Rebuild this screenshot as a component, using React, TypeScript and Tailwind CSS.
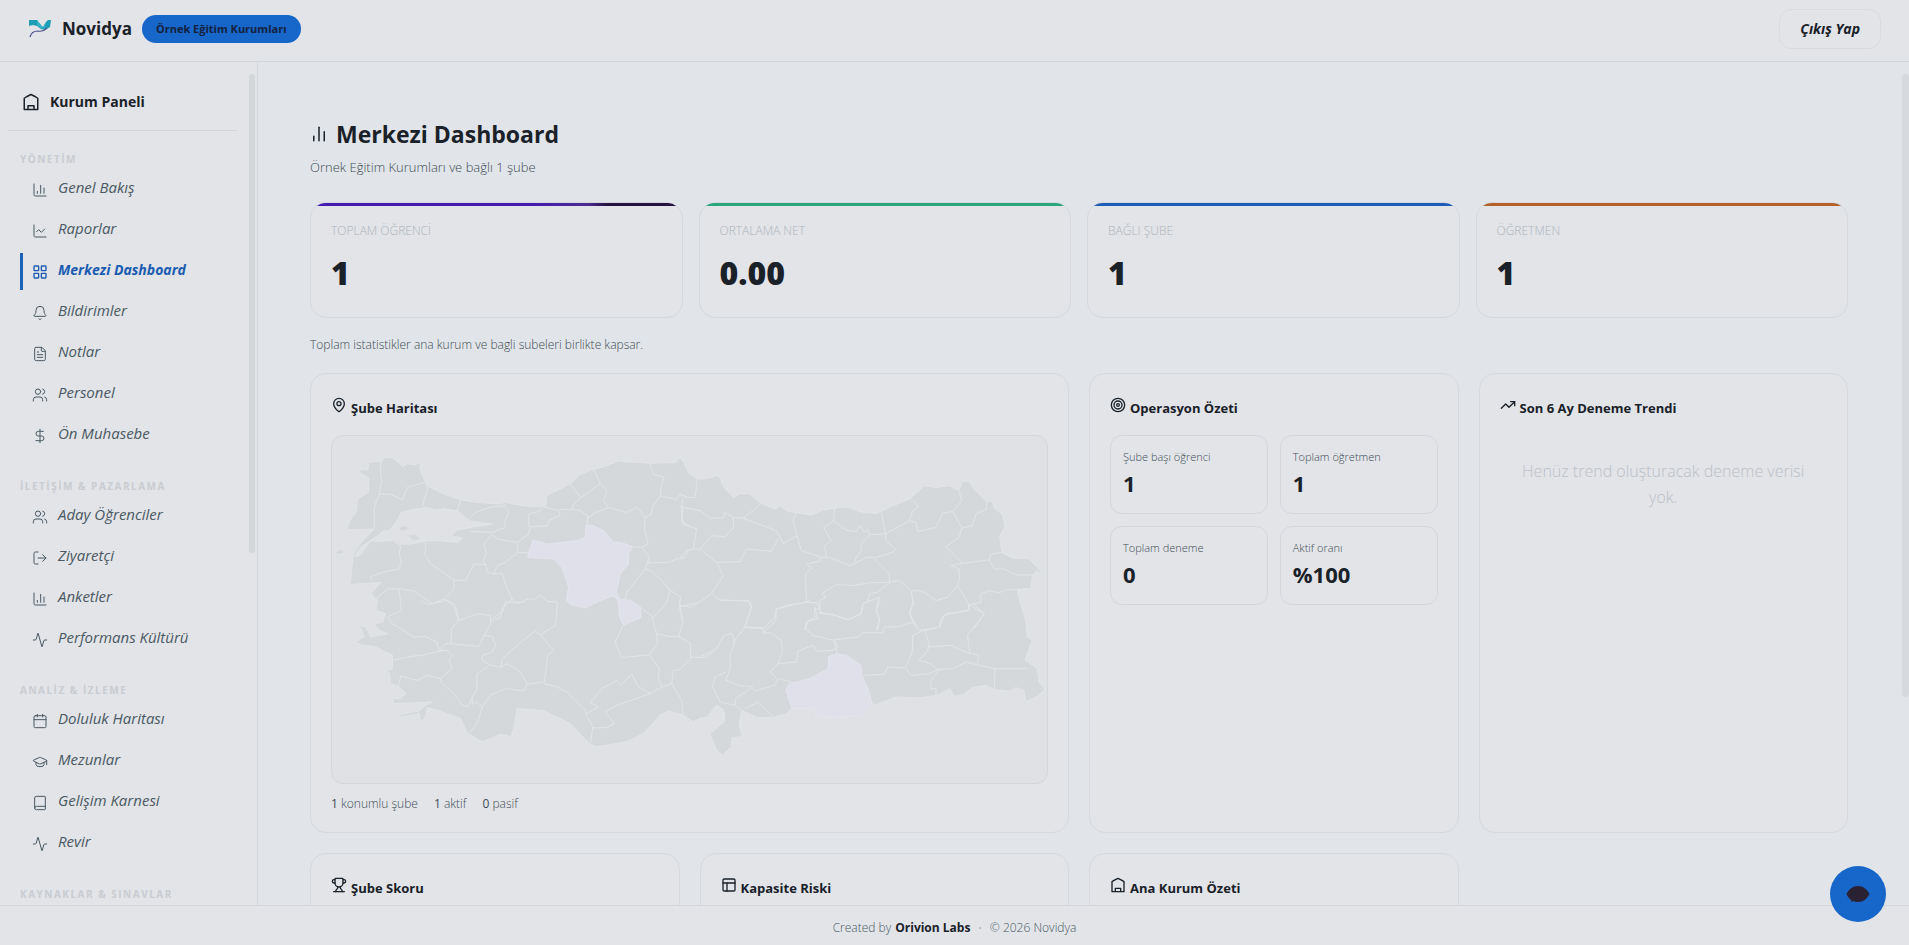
import type { ReactNode } from 'react';
import {
  Activity,
  Bell,
  Book,
  Calendar,
  ChartColumn,
  ChartLine,
  ChartNoAxesColumn,
  DollarSign,
  FileText,
  GraduationCap,
  LayoutGrid,
  LogOut,
  MapPin,
  PanelsTopLeft,
  Target,
  TrendingUp,
  Trophy,
  Users,
  type LucideIcon,
} from 'lucide-react';

type NavItem = { label: string; icon: LucideIcon; active?: boolean };
type NavSection = { title: string; items: NavItem[] };

const sections: NavSection[] = [
  {
    title: 'YÖNETİM',
    items: [
      { label: 'Genel Bakış', icon: ChartColumn },
      { label: 'Raporlar', icon: ChartLine },
      { label: 'Merkezi Dashboard', icon: LayoutGrid, active: true },
      { label: 'Bildirimler', icon: Bell },
      { label: 'Notlar', icon: FileText },
      { label: 'Personel', icon: Users },
      { label: 'Ön Muhasebe', icon: DollarSign },
    ],
  },
  {
    title: 'İLETİŞİM & PAZARLAMA',
    items: [
      { label: 'Aday Öğrenciler', icon: Users },
      { label: 'Ziyaretçi', icon: LogOut },
      { label: 'Anketler', icon: ChartColumn },
      { label: 'Performans Kültürü', icon: Activity },
    ],
  },
  {
    title: 'ANALİZ & İZLEME',
    items: [
      { label: 'Doluluk Haritası', icon: Calendar },
      { label: 'Mezunlar', icon: GraduationCap },
      { label: 'Gelişim Karnesi', icon: Book },
      { label: 'Revir', icon: Activity },
    ],
  },
  { title: 'KAYNAKLAR & SINAVLAR', items: [] },
];

const stats = [
  { label: 'TOPLAM ÖĞRENCİ', value: '1', bar: 'bg-linear-to-r from-[#451cb0] from-60% via-[#4a2a90] via-75% to-[#24123f] to-80%' },
  { label: 'ORTALAMA NET', value: '0.00', bar: 'bg-[#2ba57c]' },
  { label: 'BAĞLI ŞUBE', value: '1', bar: 'bg-[#1d5db8]' },
  { label: 'ÖĞRETMEN', value: '1', bar: 'bg-[#b5622a]' },
];

const operations = [
  { label: 'Şube başı öğrenci', value: '1' },
  { label: 'Toplam öğretmen', value: '1' },
  { label: 'Toplam deneme', value: '0' },
  { label: 'Aktif oranı', value: '%100' },
];

// Map geometry: land outline, active provinces and province borders
const land =
  '110,435 122,410 135,398 140,355 172,335 174,292 145,275 150,265 172,266 172,245 212,240 220,230 245,230 265,245 275,258 290,248 312,252 328,243 328,265 342,300 355,318 400,340 450,357 500,365 570,370 585,362 600,368 640,375 690,378 708,372 708,345 780,308 810,280 850,265 880,258 925,240 1020,247 1095,245 1110,230 1122,245 1135,275 1162,295 1195,293 1220,283 1232,292 1238,315 1270,350 1290,338 1320,340 1350,365 1395,385 1412,375 1430,390 1465,397 1505,403 1540,388 1575,382 1610,378 1660,395 1700,398 1750,375 1800,355 1845,315 1880,320 1920,315 1948,328 1960,302 1982,302 1990,320 2032,362 2050,362 2055,382 2080,400 2088,435 2072,468 2078,515 2110,532 2160,535 2185,560 2208,588 2183,572 2170,585 2166,623 2125,627 2132,660 2150,720 2155,770 2170,778 2148,840 2185,865 2190,905 2208,928 2185,948 2150,965 2145,930 2120,922 2100,933 2058,928 2030,915 1990,922 1960,945 1935,948 1922,925 1885,945 1830,953 1760,950 1695,975 1660,1005 1590,1012 1520,1008 1510,985 1445,985 1432,1000 1390,1012 1342,1012 1295,990 1288,1035 1298,1070 1267,1072 1265,1100 1238,1125 1220,1110 1200,1062 1245,1022 1242,990 1220,975 1190,1012 1170,1014 1150,1025 1120,1005 1075,992 1050,1005 1000,1060 950,1085 860,1100 838,1092 780,1030 700,992 620,985 612,1035 602,1070 570,1062 515,1085 470,1060 450,1015 430,1008 380,990 350,982 345,1010 330,1025 325,1000 262,1012 262,1005 325,992 345,975 365,965 250,970 245,955 270,955 285,940 262,918 240,910 235,875 218,872 245,865 245,825 190,798 155,795 135,785 160,768 145,735 165,740 180,770 200,765 232,760 205,750 190,730 215,725 225,700 195,690 200,660 180,640 210,605 118,612 125,540 125,525 150,485 190,445 112,447';

const marmara =
  '272,395 300,388 345,380 375,388 400,384 440,390 480,422 545,430 490,438 440,448 420,465 455,472 440,485 385,480 350,480 300,490 260,490 248,478 205,482 180,480 145,525 130,528 150,500 200,465 218,450 235,450 255,425';

const ankara =
  '828,432 850,435 880,450 910,485 930,485 968,498 955,520 955,550 930,580 918,635 928,655 960,660 990,678 993,710 965,724 940,733 928,710 925,665 912,645 870,660 825,682 780,672 768,660 775,620 755,560 730,535 652,530 655,515 668,478 710,490 800,480 825,470';

const urfa =
  '1558,828 1582,820 1610,825 1655,855 1657,885 1675,925 1690,975 1660,1005 1590,1012 1520,1008 1515,985 1447,985 1428,930 1440,910 1500,895 1555,865';

const borders: { at: string; lines: string[] }[] = [
  {
    at: 'translate(0 0)',
    lines: [
      '212,240 208,262 212,300 205,340 190,380 190,440',
      '205,340 240,340 275,357 290,320 345,303',
      '345,303 350,325 335,375',
      '450,357 440,390',
      '478,410 495,395 535,380 583,375 588,362',
      '583,375 595,395 582,420 585,440 545,455 480,452',
      '545,460 560,475 620,485 655,460 660,438 712,435 715,420 748,405 748,390 700,378 685,392 655,400 655,438',
      '748,385 808,388 832,405 832,430',
      '780,310 812,350 790,370 785,385',
      '850,265 870,308 840,330 812,350',
      '870,308 890,330 880,360 895,380 855,395 832,412',
      '895,380 950,395 980,378 1005,410 1003,445 1014,490 995,500 970,498',
      '1020,247 1030,280 1062,290 1052,320 1052,345 1028,375 1022,402 1005,410',
      '1052,345 1098,356 1110,340 1135,350',
      '1118,355 1114,400 1122,430 1140,440',
      '270,495 265,520 272,545 265,565 215,575 180,588 180,600',
      '345,485 342,520 360,550 430,598 430,625 400,655 365,670 310,632 270,625 230,625 195,655',
      '545,460 520,490 528,520 517,540 525,552 490,550 465,600 430,598',
      '525,550 530,575 550,580 575,580 590,625 605,655 620,670 650,657 675,655 690,643 710,662 740,665',
      '550,580 560,555 585,545 622,515 622,485',
      '400,655 430,670 440,690 442,720',
      '265,628 272,690 232,708',
      '605,655 575,685 570,710 540,725',
      '622,515 652,517',
      '995,500 1018,530 1005,565 950,635 945,655',
      '1010,547 1075,545 1098,535 1122,532 1135,510',
      '1005,565 1025,572 1055,600 1080,630 1068,670 1030,710 992,682',
      '1068,615 1085,632 1112,650 1108,680 1118,720',
    ],
  },
  {
    at: 'translate(0 660)',
    lines: [
      '230,50 245,70 310,110 345,108 378,125 385,150 410,150 425,165 415,180 425,205 388,235 350,225 320,240 270,228 262,258',
      '245,180 300,168 330,165 390,152',
      '330,0 350,12 385,5 410,0 430,20 445,60 422,85 422,130 405,130 385,150',
      '445,60 500,40 540,45 540,70 520,105 505,138 422,130',
      '540,60 578,30 585,5 640,5',
      '742,5 735,75 690,103 675,92 625,130 575,175 572,200 540,195 515,180 515,165 545,155 555,135 545,108 520,105',
      '690,103 730,150 712,165 702,245 650,252 640,272 585,265 540,285 515,320 500,370 475,400',
      '530,200 500,220 498,270 485,290 472,320 455,315 430,280 395,250 388,235',
      '572,200 590,190 630,215 650,252',
      '515,320 500,305 485,312 485,290',
      '702,250 740,260 770,275 825,330 830,350 848,380 840,432',
      '830,340 865,320 840,308 875,265 920,240 930,255 965,222 985,260 1020,280 920,315 885,335 912,370 890,382 848,383',
      '1020,280 1055,260 1085,250 1115,300 1118,340',
      '940,73 915,125 935,172 1018,163 1042,130 1040,100 1025,50',
      '1018,163 1048,205 1045,235 1055,258',
      '1040,100 1075,108 1105,108 1118,70 1108,0',
      '1105,108 1142,130 1142,175 1110,208 1090,210 1085,250',
      '1142,170 1185,172 1210,155',
      '1110,15 1145,20 1165,5',
    ],
  },
  {
    at: 'translate(1110 150)',
    lines: [
      '0,190 22,200 45,200 52,145',
      '0,228 60,240 90,262 130,262 135,245 160,260 190,262 225,235 240,220',
      '190,262 290,300 310,338 352,315 340,270 348,248',
      '352,315 365,360 425,380 450,380 510,405 535,395 560,380 590,380 640,365 648,355 620,330 618,310 570,312 565,295 555,305 542,285 530,302 500,298 462,270 465,232',
      '605,240 618,310 690,270 700,240 718,228 700,205',
      '690,270 710,275 715,302 770,290 790,248 820,242 848,210 838,178',
      '820,242 848,292 840,320 800,348 850,398 930,388 935,370 970,365',
      '848,292 880,285 890,250 922,235 922,212',
      '462,270 432,290 455,330 435,345 440,378',
      '570,312 545,340 545,360 527,385 530,395',
      '585,385 630,430 630,455 570,457 520,465 470,462 425,490 438,500 420,510 422,548 470,555 505,568 545,550 550,520 600,500 590,535 600,565 595,600',
      '565,515 570,490 595,485 630,455',
      '425,380 420,392 380,400 395,412 378,430 380,515 290,535 285,560 250,595 195,590 215,530 210,512 120,508 95,488 130,435 110,395 60,355',
      '110,395 180,393 200,355 275,362 295,325',
      '60,355 95,315 135,318 162,290 160,262',
      '8,230 5,275 50,295 40,355 20,360 0,380',
      '40,355 60,355',
      '95,488 60,515 0,528',
      '380,515 415,518 420,535 405,535 405,560 380,575 375,600',
      '630,455 660,450 695,480 730,482 770,510 805,500 835,465 840,450 840,415 815,405 850,398',
      '695,480 702,520 690,545 715,595',
      '835,465 868,520 868,540 800,550 785,565 780,590 735,600',
      '868,525 905,515 905,490 930,480 960,487 980,478 1015,477',
      '930,388 945,415 975,415 1010,433 1062,433',
      '885,522 915,550 885,595',
    ],
  },
  {
    at: 'translate(1170 660)',
    lines: [
      '0,170 50,145 70,108 95,98 105,125 90,170 92,200 78,240 120,257 155,258 165,272 225,255 235,235 275,245',
      '100,125 135,80 155,20 145,0 60,0',
      '135,80 190,82 190,97 215,98 245,120 248,155 235,190 212,215 235,240',
      '190,97 228,60 230,25 280,10 310,8 330,0',
      '235,190 290,185 295,152 340,135 350,152 400,150 415,140 405,120 340,105 318,85 325,62 355,55 345,20',
      '358,35 400,42 445,58 485,40 490,10 510,0',
      '405,118 475,110 490,97 550,97 555,80 600,78 640,65 632,40 642,0',
      '542,0 530,30 540,60 530,90',
      '405,120 412,160',
      '490,225 555,222 565,200 618,203 640,150 640,105 675,88 690,130 685,150 660,180 695,190 718,212 695,240 695,265 710,265 710,285',
      '618,203 635,225 690,220 715,208 760,205 800,185 885,205 985,205',
      '640,65 660,90 720,80 735,45 810,28 810,12 855,40 805,105 812,158 838,165 835,190',
      '688,140 755,135 810,160',
      '888,205 885,265',
      '78,215 45,230 38,260 60,305 105,315 108,295 155,262',
      '105,315 125,330',
      '135,325 175,305 220,350',
    ],
  },
];

function BranchMap() {
  return (
    <svg viewBox="63 165 2151 1044" className="block w-full" role="img" aria-label="Şube Haritası">
      <g fill="#d4d8db" stroke="#e2e5e8" strokeWidth="3" strokeLinejoin="round">
        <polygon points={land} />
        <polygon points="70,518 84,508 98,506 97,520 80,521" />
        <polygon points={marmara} fill="#dfe1e4" />
        <polygon points="265,440 285,436 292,446 272,450" stroke="none" />
        <polygon points="292,465 312,462 328,474 310,480" stroke="none" />
      </g>
      {borders.map((group) => (
        <g key={group.at} transform={group.at} fill="none" stroke="#e2e5e7" strokeWidth="3" strokeLinejoin="round">
          {group.lines.map((line) => (
            <polyline key={line} points={line} />
          ))}
        </g>
      ))}
      <g fill="#e0e0ea" stroke="#e4e5ec" strokeWidth="3">
        <polygon points={ankara} />
        <polygon points={urfa} />
      </g>
    </svg>
  );
}

function HouseIcon({ className }: { className: string }) {
  return (
    <svg className={className} viewBox="0 0 24 24" fill="none" stroke="currentColor" strokeWidth="2" strokeLinejoin="round">
      <path d="M3 22V7l3-2 6-3 6 3 3 2v15z" />
      <path d="M8 22v-5h8v5" />
    </svg>
  );
}

function Logo() {
  return (
    <svg className="h-6 w-6" viewBox="0 0 24 24" fill="none">
      <path d="M1 3h8l3 4 3 3 3-5 2-2 3 0-1 7-5 3-4-1-4-3-4-1-4 1z" fill="#1f9db5" />
      <path d="M9 3l6 8 3-6-1 7-4-1-4-3z" fill="#33b3c6" />
      <path d="M2 20c1-4 4-6 8-6 4 1 7-1 9-3" stroke="#4c5590" strokeWidth="1.200" />
    </svg>
  );
}

function CardTitle({ icon, children }: { icon: ReactNode; children: ReactNode }) {
  return (
    <h2 className="flex items-start gap-1 text-[13px] font-bold leading-7 text-[#1a2128]">
      {icon}
      <span>{children}</span>
    </h2>
  );
}

const card = 'rounded-2xl border border-[#d5d9dd] bg-[#e2e4e8] p-5';

export default function App() {
  return (
    <div className="flex h-screen flex-col overflow-hidden bg-[#e1e4e8] font-['Open_Sans','Noto_Sans',sans-serif] text-[#1a2128]">
      <header className="flex h-[62px] shrink-0 items-center justify-between border-b border-[#d3d7db] bg-[#e2e4e8] px-7 pb-1">
        <div className="flex items-center gap-[10px]">
          <Logo />
          <span className="text-[17px] font-bold">Novidya</span>
          <span className="rounded-full bg-[#1766c9] px-[14px] py-1 text-[11px] leading-5 font-bold text-[#14213f]">
            Örnek Eğitim Kurumları
          </span>
        </div>
        <button className="h-10 rounded-xl border border-[#d8dbdf] px-5 text-sm font-bold italic">Çıkış Yap</button>
      </header>

      <div className="flex min-h-0 flex-1">
        <aside className="relative w-[258px] shrink-0 overflow-hidden border-r border-[#d3d7db] bg-[#e2e4e8]">
          <div className="mr-5 ml-2 flex h-[69px] items-center gap-[10px] border-b border-[#d3d7db] pt-3 pl-[14px]">
            <HouseIcon className="h-[18px] w-[18px]" />
            <span className="text-sm font-bold">Kurum Paneli</span>
          </div>
          <nav className="flex flex-col gap-6 pt-5 pl-5">
            {sections.map((section) => (
              <section key={section.title}>
                <h3 className="mb-1 text-[10px] leading-4 font-bold tracking-[1.5px] text-[#c9ccd0]">{section.title}</h3>
                <ul className="flex flex-col gap-1">
                  {section.items.map(({ label, icon: Icon, active }) => (
                    <li key={label}>
                      <a
                        href="#"
                        className={
                          active
                            ? 'flex h-[37px] items-center gap-[10px] border-l-3 border-[#1c62bb] pl-[9px] text-sm font-bold text-[#1c5cb0] italic'
                            : 'flex h-[37px] items-center gap-[10px] pl-3 text-[15px] text-[#4b5963] italic'
                        }
                      >
                        <Icon className="h-4 w-4" strokeWidth={active ? 2 : 1.5} />
                        <span className="pb-1">{label}</span>
                      </a>
                    </li>
                  ))}
                </ul>
              </section>
            ))}
          </nav>
          <div className="absolute top-3 right-[2px] h-[479px] w-[6px] rounded-full bg-[#d4d7da]" />
        </aside>

        <main className="relative min-w-0 flex-1 overflow-hidden pt-[52px] pr-[61px] pl-[52px]">
          <h1 className="flex h-10 items-center gap-2 text-[23px] font-bold">
            <ChartNoAxesColumn className="h-[18px] w-[18px]" strokeWidth={2} />
            Merkezi Dashboard
          </h1>
          <p className="mt-[3px] mb-[25px] text-[13px] leading-5 font-light text-[#3f4c56]">Örnek Eğitim Kurumları ve bağlı 1 şube</p>

          <div className="grid grid-cols-4 gap-4">
            {stats.map((stat) => (
              <div key={stat.label} className="relative overflow-hidden rounded-2xl border border-[#d5d9dd] bg-[#e2e4e8] p-5">
                <div className={`absolute inset-x-0 top-0 h-[3px] ${stat.bar}`} />
                <p className="text-xs leading-4 font-light text-[#afb4ba]">{stat.label}</p>
                <p className="mt-[14px] mb-1 text-[32px] leading-10 font-extrabold">{stat.value}</p>
              </div>
            ))}
          </div>

          <p className="mt-[17px] mb-[18px] text-xs leading-5 font-light text-[#3f4c56]">
            Toplam istatistikler ana kurum ve bagli subeleri birlikte kapsar.
          </p>

          <div className="grid grid-cols-4 gap-5">
            <section className={`col-span-2 ${card}`}>
              <CardTitle icon={<MapPin className="mt-[3px] h-4 w-4" />}>Şube Haritası</CardTitle>
              <div className="mt-[13px] overflow-hidden rounded-xl border border-[#d3d7da] bg-[#dfe1e4]">
                <BranchMap />
              </div>
              <div className="mt-3 flex gap-4 text-xs leading-4 font-light text-[#3f4c56]">
                <span><b>1</b> konumlu şube</span>
                <span><b>1</b> aktif</span>
                <span><b>0</b> pasif</span>
              </div>
            </section>

            <section className={card}>
              <CardTitle icon={<Target className="mt-[3px] h-4 w-4" />}>Operasyon Özeti</CardTitle>
              <div className="mt-[13px] grid grid-cols-2 gap-3">
                {operations.map((item) => (
                  <div key={item.label} className="h-[79px] rounded-xl border border-[#d3d7db] px-3 py-[13px]">
                    <p className="text-[11px] leading-4 font-light text-[#3f4c56]">{item.label}</p>
                    <p className="text-[22px] leading-9 font-bold">{item.value}</p>
                  </div>
                ))}
              </div>
            </section>

            <section className={card}>
              <CardTitle icon={<TrendingUp className="mt-[3px] h-4 w-4" />}>Son 6 Ay Deneme Trendi</CardTitle>
              <p className="mt-9 px-5 text-center text-base leading-[26px] font-light text-[#bcc0c6]">
                Henüz trend oluşturacak deneme verisi yok.
              </p>
            </section>

            <section className={card}>
              <CardTitle icon={<Trophy className="mt-[3px] h-4 w-4" />}>Şube Skoru</CardTitle>
            </section>
            <section className={card}>
              <CardTitle icon={<PanelsTopLeft className="mt-[3px] h-4 w-4" />}>Kapasite Riski</CardTitle>
            </section>
            <section className={card}>
              <CardTitle icon={<HouseIcon className="mt-[3px] h-4 w-4" />}>Ana Kurum Özeti</CardTitle>
            </section>
          </div>
          <div className="absolute top-3 right-0 h-[623px] w-[7px] rounded-full bg-[#d6d9dd]" />
        </main>
      </div>

      <footer className="flex h-10 shrink-0 items-center justify-center gap-1 border-t border-[#d3d7db] bg-[#e2e4e8] pt-1 text-xs font-light text-[#4b5963]">
        <span>Created by</span>
        <strong className="font-bold text-[#1a2128]">Orivion Labs</strong>
        <span className="px-1 font-bold text-[#b0b5ba]">·</span>
        <span>© 2026 Novidya</span>
      </footer>

      <button
        aria-label="Sohbet"
        className="fixed right-[23px] bottom-[23px] flex h-14 w-14 items-center justify-center rounded-full bg-[#1766c9]"
      >
        <svg className="h-6 w-6" viewBox="0 0 24 24">
          <path d="M.5 12C3 7 7 4 12 4s9 3 11.500 8c-2.500 5-6.500 8-11.500 8-2 0-3.500-.3-5-1l-2 1v-2C3 16.500 1.500 14.500.5 12z" fill="#2a2133" />
        </svg>
      </button>
    </div>
  );
}
